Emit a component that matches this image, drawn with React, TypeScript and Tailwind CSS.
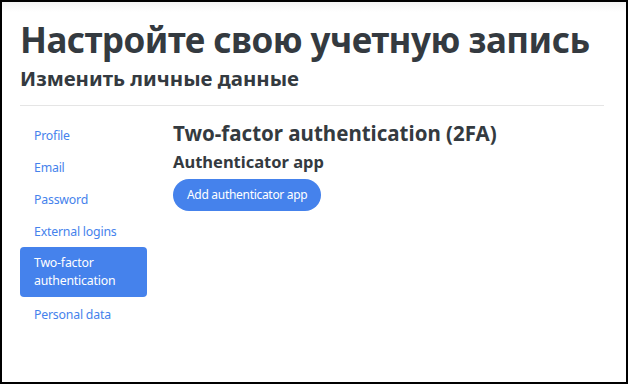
const navItems = [
  "Profile",
  "Email",
  "Password",
  "External logins",
  "Two-factor authentication",
  "Personal data",
];

export default function App() {
  const active = "Two-factor authentication";
  return (
    <div
      className="w-[628px] h-[384px] border-2 border-black bg-[linear-gradient(#f3f3f3,#ffffff_10px)] px-[18px] pt-[14px] text-[#343a40]"
      style={{ fontFamily: '"Noto Sans", "Open Sans", sans-serif' }}
    >
      {/* Page header */}
      <h1 className="text-[35px] font-bold leading-[48px] tracking-[-0.5px]">
        Настройте свою учетную запись
      </h1>
      <h2 className="text-[20.4px] font-bold leading-[26px] mt-[1px]">Изменить личные данные</h2>
      <hr className="mt-[14px] mr-[4px] border-t border-[#e5e5e5]" />

      <div className="flex mt-[14px]">
        {/* Side nav */}
        <nav className="w-[127px] flex flex-col">
          {navItems.map((item) =>
            item === active ? (
              <a
                key={item}
                className="block -mt-[1px] mb-[2px] rounded-[4px] bg-[#4582ec] text-white px-[14px] py-[7px] text-[12.3px] tracking-[-0.2px] leading-[18px]"
              >
                Two-factor
                <br />
                authentication
              </a>
            ) : (
              <a
                key={item}
                className="block px-[14px] h-[32px] flex items-center text-[12.3px] tracking-[-0.2px] text-[#4582ec]"
              >
                {item}
              </a>
            )
          )}
        </nav>

        {/* Content */}
        <div className="ml-[26px]">
          <h3 className="text-[20.5px] font-bold leading-[26px]">
            Two-factor authentication (2FA)
          </h3>
          <h4 className="text-[16.5px] font-bold leading-[22px] mt-[5px]">Authenticator app</h4>
          <button className="mt-[6px] h-[32px] px-[14px] rounded-full bg-[#4582ec] text-white text-[12px] tracking-[-0.3px]">
            Add authenticator app
          </button>
        </div>
      </div>
    </div>
  );
}
